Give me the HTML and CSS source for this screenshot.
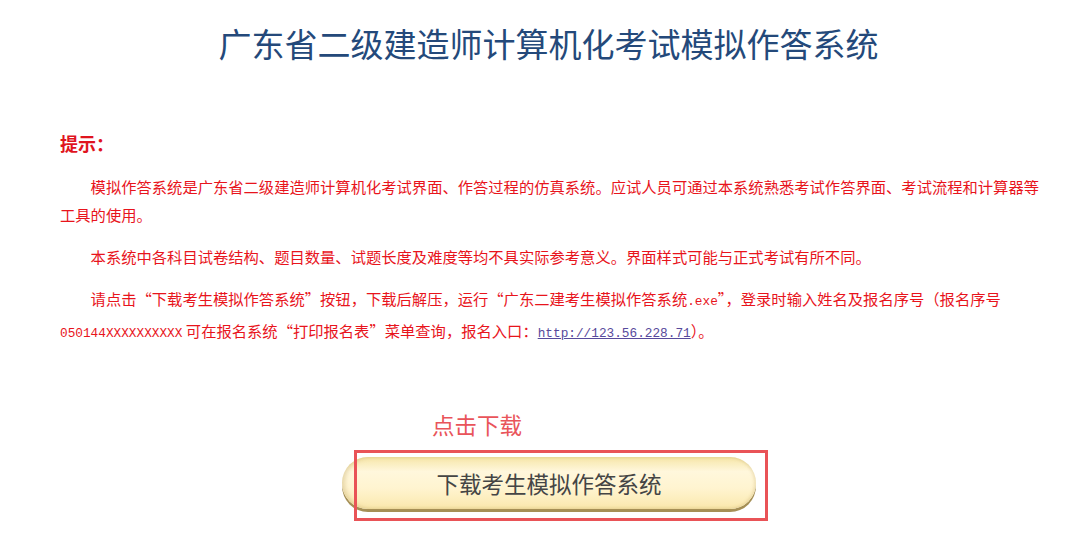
FILE: index.html
```html
<!DOCTYPE html>
<html lang="zh-CN">
<head>
<meta charset="utf-8">
<title>广东省二级建造师计算机化考试模拟作答系统</title>
<link rel="stylesheet" href="styles.css">
</head>
<body>
<div class="page">
  <h1 class="title">广东省二级建造师计算机化考试模拟作答系统</h1>
  <div class="tips">
    <h2 class="tips-head">提示：</h2>
    <p class="para">模拟作答系统是广东省二级建造师计算机化考试界面、作答过程的仿真系统。应试人员可通过本系统熟悉考试作答界面、考试流程和计算器等工具的使用。</p>
    <p class="para">本系统中各科目试卷结构、题目数量、试题长度及难度等均不具实际参考意义。界面样式可能与正式考试有所不同。</p>
    <p class="para">请点击“下载考生模拟作答系统”按钮，下载后解压，运行“广东二建考生模拟作答系统<span class="lat">.exe</span>”，登录时输入姓名及报名序号（报名序号<span class="lat">050144XXXXXXXXXX</span> 可在报名系统“打印报名表”菜单查询，报名入口：<a class="lat link" href="#">http://123.56.228.71</a>）。</p>
  </div>
  <div class="download">
    <div class="hint">点击下载</div>
    <div class="btn-wrap">
      <div class="btn">下载考生模拟作答系统</div>
      <div class="mark"></div>
    </div>
  </div>
</div>
</body>
</html>
```

FILE: styles.css
```css
html, body {
  margin: 0;
  padding: 0;
  background: #ffffff;
}
body {
  font-family: "Noto Sans CJK SC", "Noto Sans", sans-serif;
  min-height: 548px;
}
.page {
  width: 985px;
  margin-left: 60px;
  padding-top: 23px;
  padding-bottom: 30px;
}
.title {
  margin: 0;
  font-size: 33px;
  line-height: 40px;
  font-weight: 400;
  color: #24497a;
  text-align: center;
  letter-spacing: 0;
  padding-right: 8px;
}
.tips {
  margin-top: 68px;
}
.tips-head {
  margin: 0;
  font-size: 18px;
  line-height: 24px;
  font-weight: 700;
  color: #e0141e;
}
.para {
  margin: 17px 0 0 0;
  font-size: 15.3px;
  line-height: 28px;
  color: #e8141c;
  text-indent: 2em;
}
.para + .para {
  margin-top: 14px;
}
.lat {
  font-family: "Liberation Mono", monospace;
  font-size: 12.75px;
}
.link {
  color: #574a9c;
  text-decoration: underline;
}
.download {
  margin-top: 61px;
  padding-left: 282px;
}
.hint {
  margin-left: 90px;
  font-size: 22.5px;
  line-height: 30px;
  color: #e9545a;
}
.btn-wrap {
  position: relative;
  margin-top: 18px;
  width: 414px;
  padding-bottom: 14px;
}
.btn {
  height: 52px;
  border-radius: 27px;
  background: linear-gradient(to bottom, #f6e6a8 0%, #fff7dc 28%, #fff4d0 60%, #fae8ad 100%);
  box-shadow: 0 3px 0 #a58f55, inset 3px 0 4px rgba(190, 160, 90, 0.35), inset -2px 0 3px rgba(200, 170, 100, 0.25);
  font-size: 22.5px;
  line-height: 52px;
  text-align: center;
  color: #454545;
}
.mark {
  position: absolute;
  left: 12px;
  top: -7px;
  width: 408px;
  height: 65px;
  border: 3px solid #e95357;
}
```
